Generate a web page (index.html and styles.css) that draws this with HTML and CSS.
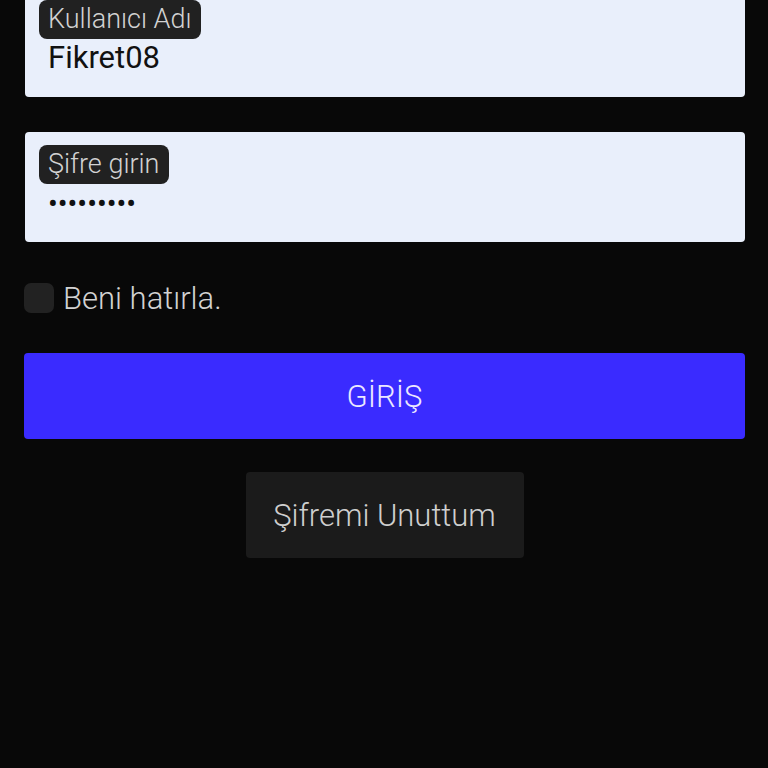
FILE: index.html
```html
<!DOCTYPE html>
<html lang="tr">
<head>
<meta charset="utf-8">
<link rel="stylesheet" href="styles.css">
</head>
<body>
<main class="form">
  <div class="field first">
    <span class="label">Kullanıcı Adı</span>
    <span class="value">Fikret08</span>
  </div>
  <div class="field">
    <span class="label">Şifre girin</span>
    <span class="dots">•••••••••</span>
  </div>
  <label class="remember">
    <span class="box"></span>
    <span class="remember-text">Beni hatırla.</span>
  </label>
  <button class="login">GİRİŞ</button>
  <div class="forgot-wrap">
    <button class="forgot">Şifremi Unuttum</button>
  </div>
</main>
</body>
</html>
```
FILE: styles.css
```css
html, body {
  margin: 0;
  padding: 0;
  background: #080808;
  height: 100%;
  overflow: hidden;
}
body {
  font-family: Roboto, "Noto Sans", sans-serif;
}
.form {
  display: flex;
  flex-direction: column;
  padding: 0 23px 0 24px;
  margin-top: -13px;
}
.field {
  background: #e9effb;
  border-radius: 4px;
  height: 110px;
  margin-left: 1px;
  box-sizing: border-box;
  padding: 13px 0 0 14px;
  display: flex;
  flex-direction: column;
  align-items: flex-start;
  margin-bottom: 35px;
}
.label {
  background: #212121;
  color: #d2d2d2;
  font-size: 27px;
  font-weight: 300;
  border-radius: 8px;
  height: 39px;
  line-height: 39px;
  padding: 0 10px 0 9px;
}
.value {
  color: #111;
  font-size: 31px;
  font-weight: 400;
  line-height: 38px;
  margin-left: 9px;
}
.dots {
  color: #111;
  font-size: 29px;
  line-height: 40px;
  margin-left: 9px;
}
.remember {
  display: flex;
  align-items: center;
  gap: 9px;
  margin-top: 6px;
  height: 30px;
}
.box {
  width: 30px;
  height: 30px;
  border-radius: 7px;
  background: #222;
}
.remember-text {
  color: #d2d2d2;
  font-size: 31px;
  font-weight: 300;
}
.login {
  margin-top: 40px;
  height: 86px;
  border: none;
  border-radius: 4px;
  background: #3a2bff;
  color: #ece8ff;
  font-family: Roboto, sans-serif;
  font-size: 31px;
  font-weight: 300;
}
.forgot-wrap {
  display: flex;
  justify-content: center;
  margin-top: 33px;
}
.forgot {
  width: 278px;
  height: 86px;
  border: none;
  border-radius: 4px;
  background: #1b1b1b;
  color: #cfcfcf;
  font-family: Roboto, sans-serif;
  font-size: 31px;
  font-weight: 300;
}
```
